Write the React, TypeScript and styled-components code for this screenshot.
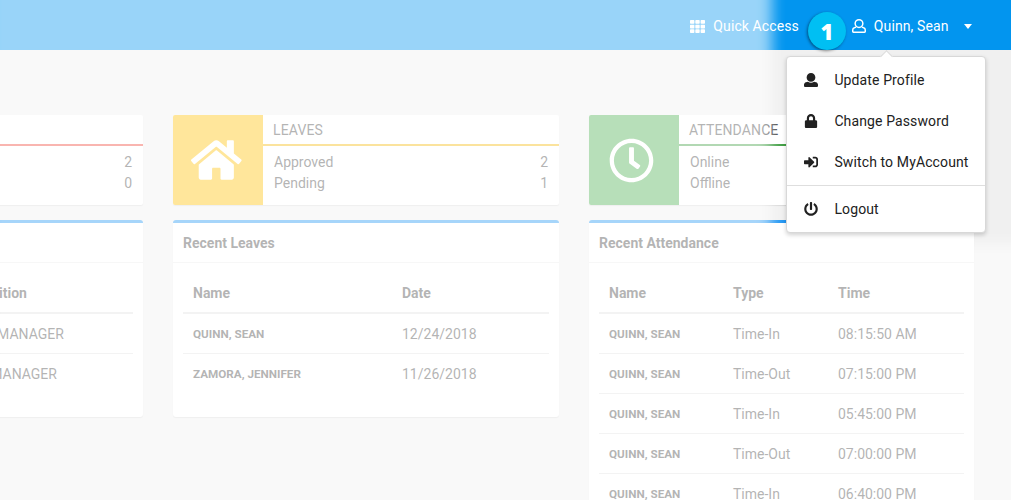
import React from "react";
import styled, { createGlobalStyle } from "styled-components";
import { FaLock, FaSignInAlt, FaPowerOff, FaTh, FaRegClock } from "react-icons/fa";

const GlobalStyle = createGlobalStyle`
  *, *::before, *::after { box-sizing: border-box; }
  body {
    margin: 0;
    background: #f0f0f0;
    font-family: Roboto, "Liberation Sans", sans-serif;
    font-size: 14px;
    line-height: 20px;
    color: #444;
  }
`;

const Page = styled.div`
  position: relative;
  width: 1011px;
  height: 500px;
  overflow: hidden;
`;

const TopBar = styled.header`
  display: flex;
  justify-content: flex-end;
  align-items: center;
  height: 50px;
  padding: 2px 39.5px 0 0;
  background: #0295ef;
  color: #fff;
`;

const NavItem = styled.a<{ $after?: number }>`
  display: flex;
  align-items: center;
  gap: 8px;
  margin-right: ${(p) => p.$after ?? 0}px;
  white-space: nowrap;
  letter-spacing: 0.1px;
`;

const Caret = styled.span`
  margin-left: 7px;
  border: 4.5px solid transparent;
  border-top: 5px solid #fff;
  border-bottom: 0;
`;

const Board = styled.main`
  display: grid;
  grid-template-columns: 386px 386px 385px;
  column-gap: 30px;
  justify-content: end;
  align-items: start;
  padding: 65px 37px 0 0;
`;

const Column = styled.section`
  display: flex;
  flex-direction: column;
  gap: 15px;
`;

const InfoCard = styled.div`
  display: flex;
  height: 90px;
  border-radius: 2px;
  overflow: hidden;
  background: #fff;
  box-shadow: 0 1px 1px rgba(0, 0, 0, 0.1);
`;

const InfoIcon = styled.div<{ $color: string; $shift: number }>`
  display: flex;
  align-items: center;
  justify-content: center;
  flex: 0 0 90px;
  padding-right: ${(p) => p.$shift}px;
  background: ${(p) => p.$color};
  color: #fff;
`;

const InfoContent = styled.div`
  flex: 1;
`;

const InfoTitle = styled.div<{ $color: string }>`
  height: 31px;
  padding: 5px 10px 0;
  border-bottom: 2px solid ${(p) => p.$color};
  letter-spacing: 0.12px;
`;

const InfoList = styled.div`
  padding: 6px 11px 0;
`;

const InfoRow = styled.div`
  display: flex;
  justify-content: space-between;
  line-height: 21px;
`;

const Panel = styled.div`
  min-height: 197px;
  border-top: 3px solid #2196f3;
  border-radius: 3px;
  background: #fff;
  box-shadow: 0 1px 1px rgba(0, 0, 0, 0.1);
`;

const PanelTitle = styled.h3`
  height: 40px;
  margin: 0;
  padding: 10px 10px 0;
  border-bottom: 1px solid #ececec;
  font-size: 14px;
  font-weight: 700;
  line-height: 20px;
`;

const PanelBody = styled.div`
  padding: 10px 10px 23px;
`;

const Row = styled.div<{ $cols: string; $head?: boolean }>`
  display: grid;
  grid-template-columns: ${(p) => p.$cols};
  align-items: center;
  height: ${(p) => (p.$head ? 41 : 40)}px;
  padding: 0 10px;
  border-bottom: ${(p) => (p.$head ? 2 : 1)}px solid #e0e0e0;
  font-weight: ${(p) => (p.$head ? 700 : 400)};
  white-space: nowrap;
  &:last-child { border-bottom-color: transparent; }
`;

const PersonName = styled.span`
  font-size: 11.7px;
  font-weight: 700;
`;

const Veil = styled.div`
  position: absolute;
  inset: 0;
  box-shadow: inset 772px -257px 14px 0 rgba(255, 255, 255, 0.6);
  pointer-events: none;
`;

const Menu = styled.div`
  position: absolute;
  top: 56px;
  left: 786px;
  width: 200px;
  height: 177px;
  padding: 2px 0;
  border: 1px solid #d8d8d8;
  border-radius: 4px;
  background: #fff;
  color: #212121;
  box-shadow: 0 2px 4px rgba(0, 0, 0, 0.18);
  &::before {
    content: "";
    position: absolute;
    top: -5px;
    left: 95px;
    width: 9px;
    height: 9px;
    border: solid #d8d8d8;
    border-width: 1px 0 0 1px;
    background: #fff;
    transform: rotate(45deg);
  }
`;

const MenuItem = styled.a`
  display: flex;
  align-items: center;
  gap: 16px;
  height: 41px;
  padding-left: 17.4px;
  white-space: nowrap;
  letter-spacing: 0.12px;
`;

const MenuDivider = styled.div`
  height: 1px;
  margin: 3px 0 2px;
  background: #dedede;
`;

const StepBadge = styled.div`
  position: absolute;
  top: 12px;
  left: 808px;
  display: flex;
  align-items: center;
  justify-content: center;
  width: 38px;
  height: 38px;
  border-radius: 50%;
  background: #00bff3;
  box-shadow: -1px 1px 3px rgba(0, 0, 0, 0.45);
  color: #fff;
  font: 800 22px/38px "Open Sans", sans-serif;
`;

const HomeIcon = () => (
  <svg width="50.6" height="45" viewBox="0 6 576 512" fill="currentColor">
    <path d="M488 312.7V456c0 13.3-10.7 24-24 24H348c-6.6 0-12-5.4-12-12V356c0-6.6-5.4-12-12-12h-72c-6.6 0-12 5.4-12 12v112c0 6.6-5.4 12-12 12H112c-13.3 0-24-10.7-24-24V312.7c0-3.6 1.6-7 4.4-9.3l188-154.8c4.4-3.6 10.8-3.6 15.3 0l188 154.8c2.7 2.3 4.3 5.7 4.3 9.3zm83.6-60.9L488 182.9V44.4c0-6.6-5.4-12-12-12h-56c-6.6 0-12 5.4-12 12V117l-89.5-73.7c-17.7-14.6-43.3-14.6-61 0L4.4 251.8c-5.1 4.2-5.8 11.8-1.6 16.9l25.5 31c4.2 5.1 11.8 5.8 16.9 1.6l235.2-193.7c4.4-3.6 10.8-3.6 15.3 0l235.2 193.7c5.1 4.2 12.7 3.5 16.9-1.6l25.5-31c4.2-5.2 3.4-12.7-1.7-16.9z" />
  </svg>
);

const UserIcon = () => (
  <svg width="14" height="14" viewBox="0 0 512 512" fill="currentColor">
    <path d="M256 0c88.366 0 160 71.634 160 160s-71.634 160-160 160S96 248.366 96 160 167.634 0 256 0zm183.283 333.821l-71.313-17.828c-74.923 53.89-165.738 41.864-223.94 0l-71.313 17.828C29.981 344.505 0 382.903 0 426.955V464c0 26.51 21.49 48 48 48h416c26.51 0 48-21.49 48-48v-37.045c0-44.052-29.981-82.45-72.717-93.134z" />
  </svg>
);

const UserOutlineIcon = () => (
  <svg width="14" height="14" viewBox="0 0 512 512" fill="none" stroke="currentColor" strokeWidth="54">
    <circle cx="256" cy="168" r="141" />
    <path d="M150 298L86 320C46 332 27 362 27 400v61c0 13 11 24 24 24h410c13 0 24-11 24-24v-61c0-38-19-68-59-80l-64-22" />
  </svg>
);

type Stat = [string, string];

interface SummaryProps {
  title: string;
  icon: React.ReactNode;
  shift: number;
  color: string;
  line: string;
  stats: Stat[];
}

const Summary = ({ title, icon, shift, color, line, stats }: SummaryProps) => (
  <InfoCard>
    <InfoIcon $color={color} $shift={shift}>{icon}</InfoIcon>
    <InfoContent>
      <InfoTitle $color={line}>{title}</InfoTitle>
      <InfoList>
        {stats.map(([label, value], i) => (
          <InfoRow key={i}>
            <span>{label}</span>
            <span>{value}</span>
          </InfoRow>
        ))}
      </InfoList>
    </InfoContent>
  </InfoCard>
);

interface RecordsProps {
  title: string;
  cols: string;
  head: string[];
  rows: string[][];
}

const Records = ({ title, cols, head, rows }: RecordsProps) => (
  <Panel>
    <PanelTitle>{title}</PanelTitle>
    <PanelBody>
      <Row $cols={cols} $head>
        {head.map((h, i) => <span key={i}>{h}</span>)}
      </Row>
      {rows.map(([name, ...rest], i) => (
        <Row key={i} $cols={cols}>
          <PersonName>{name}</PersonName>
          {rest.map((cell, j) => <span key={j}>{cell}</span>)}
        </Row>
      ))}
    </PanelBody>
  </Panel>
);

const attendance = [
  ["QUINN, SEAN", "Time-In", "08:15:50 AM"],
  ["QUINN, SEAN", "Time-Out", "07:15:00 PM"],
  ["QUINN, SEAN", "Time-In", "05:45:00 PM"],
  ["QUINN, SEAN", "Time-Out", "07:00:00 PM"],
  ["QUINN, SEAN", "Time-In", "06:40:00 PM"],
];

export default function App() {
  return (
    <Page>
      <GlobalStyle />
      <TopBar>
        <NavItem $after={53}>
          <FaTh size={15} />
          Quick Access
        </NavItem>
        <NavItem>
          <UserOutlineIcon />
          Quinn, Sean
          <Caret />
        </NavItem>
      </TopBar>
      <Board>
        <Column>
          <Summary title="" icon={null} shift={0} color="#f44336" line="#f1483b" stats={[["", "2"], ["", "0"]]} />
          <Records
            title=""
            cols="198px 1fr"
            head={["", "Position"]}
            rows={[["", "HR MANAGER"], ["", "IT MANAGER"]]}
          />
        </Column>
        <Column>
          <Summary
            title="LEAVES"
            icon={<HomeIcon />}
            shift={3}
            color="#ffc107"
            line="#f5b80a"
            stats={[["Approved", "2"], ["Pending", "1"]]}
          />
          <Records
            title="Recent Leaves"
            cols="209px 1fr"
            head={["Name", "Date"]}
            rows={[["QUINN, SEAN", "12/24/2018"], ["ZAMORA, JENNIFER", "11/26/2018"]]}
          />
        </Column>
        <Column>
          <Summary
            title="ATTENDANCE"
            icon={<FaRegClock size={45} />}
            shift={5}
            color="#4caf50"
            line="#3f9e43"
            stats={[["Online", ""], ["Offline", ""]]}
          />
          <Records title="Recent Attendance" cols="124px 105px 1fr" head={["Name", "Type", "Time"]} rows={attendance} />
        </Column>
      </Board>
      <Veil />
      <Menu>
        <MenuItem><UserIcon />Update Profile</MenuItem>
        <MenuItem><FaLock size={14} />Change Password</MenuItem>
        <MenuItem><FaSignInAlt size={14} />Switch to MyAccount</MenuItem>
        <MenuDivider />
        <MenuItem><FaPowerOff size={14} />Logout</MenuItem>
      </Menu>
      <StepBadge>1</StepBadge>
    </Page>
  );
}
